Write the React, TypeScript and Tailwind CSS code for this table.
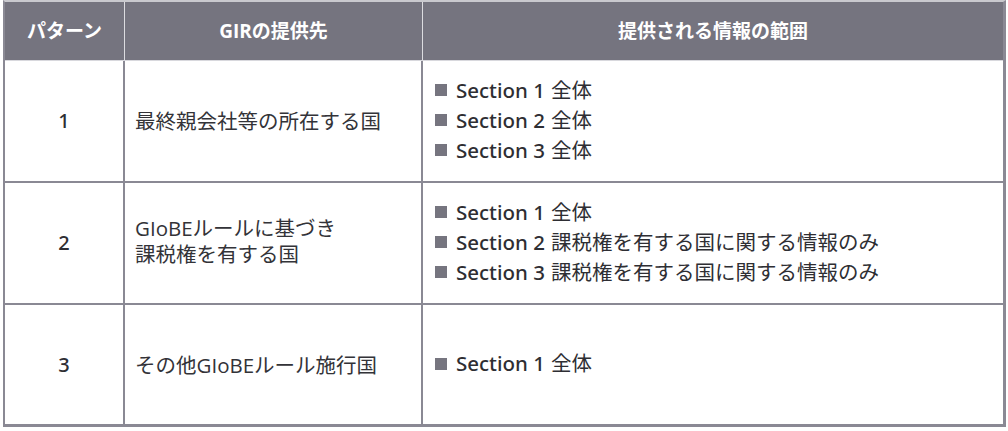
import React from "react";

const FONT = { fontFamily: '"Open Sans", "Noto Sans CJK JP", sans-serif' };
const LABEL = { fontFamily: '"Noto Sans", "Open Sans", sans-serif' };

function Bullet({ label, rest }: { label: string; rest: string }) {
  return (
    <div className="flex items-center h-[30px]">
      <div className="w-[12px] h-[12px] bg-[#76757f] mr-[9px] shrink-0" />
      <span className="font-medium text-[#2e2e33]" style={LABEL}>
        {label}
      </span>
      <span className="ml-[6px] text-[#2e2e33]">{rest}</span>
    </div>
  );
}

function Row({
  num,
  dest,
  items,
  last,
}: {
  num: string;
  dest: React.ReactNode;
  items: { label: string; rest: string }[];
  last?: boolean;
}) {
  return (
    <div
      className={`flex ${last ? "h-[119px]" : "h-[122px] border-b-2 border-[#8a8994]"}`}
    >
      <div
        className="w-[120px] border-r-2 border-[#8a8994] flex items-center justify-center text-[20px] font-medium text-[#2e2e33]"
        style={LABEL}
      >
        {num}
      </div>
      <div className="w-[298px] border-r-2 border-[#8a8994] flex items-center pl-[10px] text-[20.5px] leading-[26px] text-[#333338]">
        {dest}
      </div>
      <div className="flex-1 flex flex-col justify-center pl-[12px] pb-[2px] text-[20.5px]">
        {items.map((it, i) => (
          <Bullet key={i} label={it.label} rest={it.rest} />
        ))}
      </div>
    </div>
  );
}

export default function App() {
  return (
    <div className="w-[1008px] h-[431px] bg-white" style={FONT}>
      <div className="ml-[3px] w-[1003px] border-t-2 border-t-[#c9c9ce] border-l-2 border-l-[#8a8994] border-r-[3px] border-r-[#8a8994] border-b-[3px] border-b-[#8a8994]">
        <div className="flex h-[59px] bg-[#75747f] border-b border-[#d8d8dd] text-white font-bold text-[19px]">
          <div className="w-[120px] border-r border-[#dcdce0] flex items-center justify-center">
            パターン
          </div>
          <div className="w-[298px] border-r border-[#dcdce0] flex items-center justify-center">
            GIRの提供先
          </div>
          <div className="flex-1 flex items-center justify-center">
            提供される情報の範囲
          </div>
        </div>
        <Row
          num="1"
          dest={<span>最終親会社等の所在する国</span>}
          items={[
            { label: "Section 1", rest: "全体" },
            { label: "Section 2", rest: "全体" },
            { label: "Section 3", rest: "全体" },
          ]}
        />
        <Row
          num="2"
          dest={
            <div className="-mt-[5px]">
              <div>GIoBEルールに基づき</div>
              <div>課税権を有する国</div>
            </div>
          }
          items={[
            { label: "Section 1", rest: "全体" },
            { label: "Section 2", rest: "課税権を有する国に関する情報のみ" },
            { label: "Section 3", rest: "課税権を有する国に関する情報のみ" },
          ]}
        />
        <Row
          num="3"
          last
          dest={<span>その他GIoBEルール施行国</span>}
          items={[{ label: "Section 1", rest: "全体" }]}
        />
      </div>
    </div>
  );
}
